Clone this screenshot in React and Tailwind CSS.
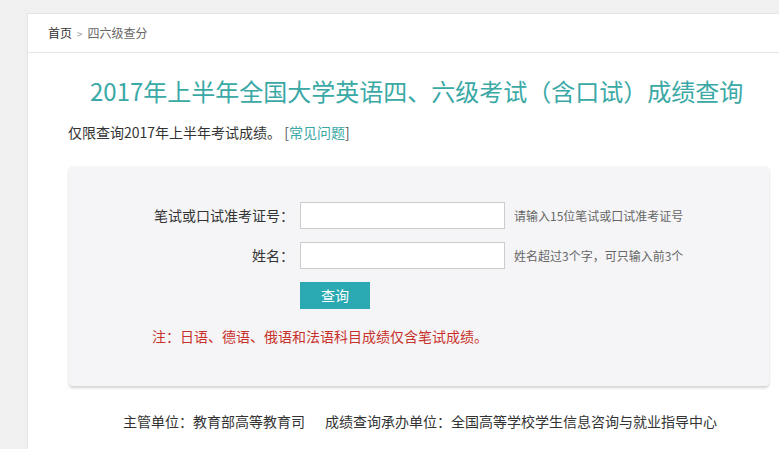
const font = "font-['Microsoft_YaHei','Noto_Sans_CJK_SC',sans-serif]"

export default function App() {
  return (
    <div className={`min-h-screen w-[779px] h-[449px] overflow-hidden bg-[#f0f0f0] pt-[13px] pl-[27px] ${font}`}>
      <div className="bg-white border-l border-t border-[#e4e4e4] h-[500px]">
        {/* breadcrumb */}
        <div className="h-[39px] flex items-center pl-[20px] border-b border-[#e6e6e6] text-[12px]">
          <span className="text-[#333]">首页</span>
          <span className="text-[#999] text-[10px] mx-[5px]">&gt;</span>
          <span className="text-[#666]">四六级查分</span>
        </div>

        <h1 className="text-[24px] leading-none text-[#3aa9a6] pt-[26px] pl-[62px] whitespace-nowrap">
          2017年上半年全国大学英语四、六级考试（含口试）成绩查询
        </h1>

        <p className="text-[14px] text-[#333] mt-[22px] pl-[40px] leading-none">
          仅限查询2017年上半年考试成绩。 <span className="text-[#555]">[<span className="text-[#3aa9a6]">常见问题</span>]</span>
        </p>

        {/* form box */}
        <div className="ml-[41px] mt-[27px] w-[700px] h-[220px] bg-[#f5f5f7] rounded-[4px] shadow-[0_2px_3px_rgba(0,0,0,0.18)] pt-[36px]">
          <div className="flex items-center h-[27px]">
            <label className="w-[231px] text-right text-[14px] text-[#333] pr-[6px]">笔试或口试准考证号：</label>
            <input className="w-[205px] h-[27px] bg-white border border-[#ccc] outline-none" />
            <span className="ml-[9px] text-[12px] text-[#666]">请输入15位笔试或口试准考证号</span>
          </div>
          <div className="flex items-center h-[27px] mt-[13px]">
            <label className="w-[231px] text-right text-[14px] text-[#333] pr-[6px]">姓名：</label>
            <input className="w-[205px] h-[27px] bg-white border border-[#ccc] outline-none" />
            <span className="ml-[9px] text-[12px] text-[#666]">姓名超过3个字，可只输入前3个</span>
          </div>
          <div className="pl-[231px] mt-[13px]">
            <button className="w-[70px] h-[27px] bg-[#2ba9b3] text-white text-[14px]">查询</button>
          </div>
          <p className="pl-[83px] mt-[20px] text-[14px] text-[#c8312b] leading-none">
            注：日语、德语、俄语和法语科目成绩仅含笔试成绩。
          </p>
        </div>

        <p className="mt-[28px] pl-[95px] text-[14px] text-[#333] leading-none">
          主管单位：教育部高等教育司<span className="inline-block w-[20px]" />成绩查询承办单位：全国高等学校学生信息咨询与就业指导中心
        </p>
      </div>
    </div>
  )
}
